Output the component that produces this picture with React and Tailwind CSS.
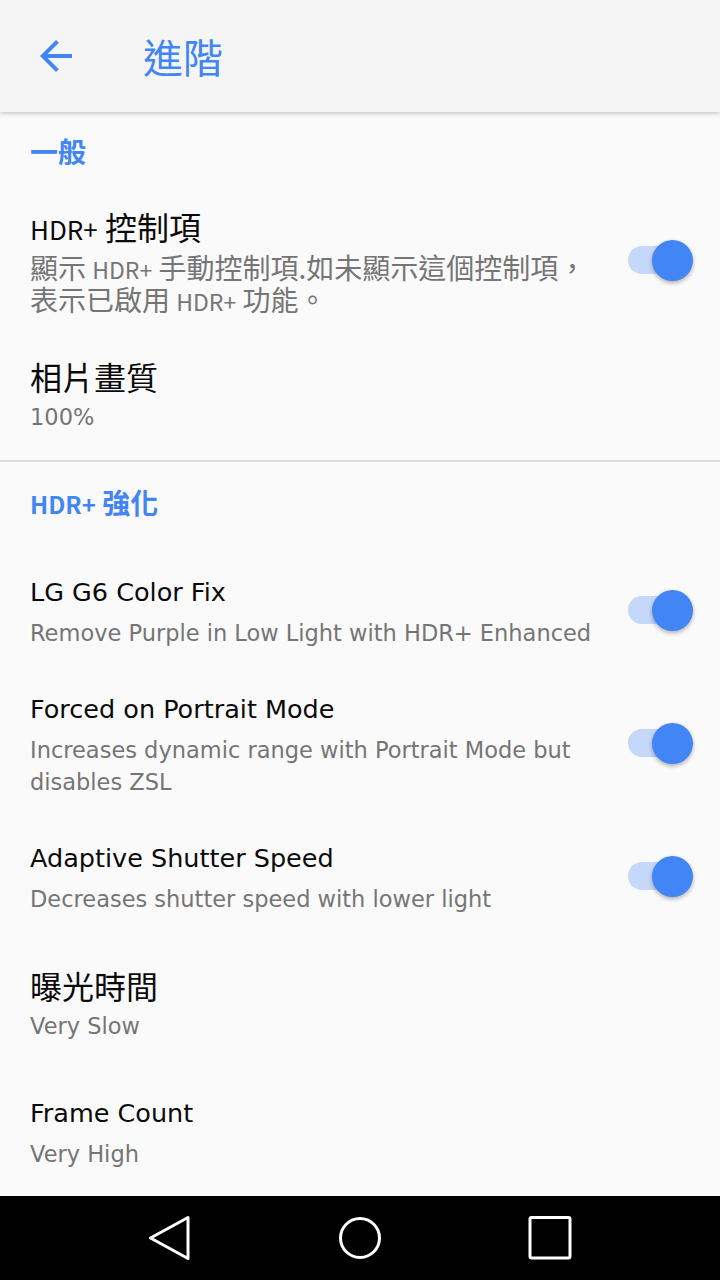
import React from 'react';

const cjk = "font-['Noto_Sans_CJK_TC',sans-serif]";
const latin = "font-['DejaVu_Sans',sans-serif]";

function Toggle() {
  return (
    <div className="relative w-[65px] h-[41px] mr-[27px] mb-[2px] shrink-0">
      <div className="absolute left-0 top-[6px] w-[60px] h-[28px] rounded-full bg-[#c5d8f9]" />
      <div className="absolute right-0 top-0 w-[41px] h-[41px] rounded-full bg-[#4285f4] shadow-[0_2px_4px_rgba(0,0,0,0.3)]" />
    </div>
  );
}

function SettingRow({ title, summary, toggle, cjkTitle, cjkSummary, spacing }) {
  const titleCls = cjkTitle ? `text-[32px] ${cjk}` : `text-[25.5px] ${latin}`;
  const summaryCls = cjkSummary ? `text-[28px] ${cjk}` : `text-[22.5px] ${latin}`;
  return (
    <div className={`flex items-center ${spacing}`}>
      <div className="flex-1 pl-[30px]">
        <div className={`leading-[36px] text-[#0a0a0a] ${titleCls}`}>{title}</div>
        <div className={`mt-[7px] leading-[32px] text-[#757575] ${summaryCls}`}>{summary}</div>
      </div>
      {toggle && <Toggle />}
    </div>
  );
}

function SectionHeader({ children, spacing }) {
  return (
    <div className={`pl-[30px] text-[28px] leading-[32px] font-bold text-[#4285f4] ${cjk} ${spacing}`}>
      {children}
    </div>
  );
}

export default function App() {
  return (
    <div className="w-[720px] h-[1280px] flex flex-col bg-[#fafafa] overflow-hidden">
      {/* App bar */}
      <header className="relative z-10 h-[112px] shrink-0 flex items-center bg-[#f5f5f5] shadow-[0_2px_4px_rgba(0,0,0,0.18)]">
        <svg className="ml-[32px] w-[48px] h-[48px]" viewBox="0 0 24 24" fill="#4285f4">
          <path d="M20 11H7.83l5.59-5.59L12 4l-8 8 8 8 1.41-1.41L7.83 13H20v-2z" />
        </svg>
        <h1 className={`ml-[63px] text-[40px] leading-[48px] text-[#4285f4] ${cjk}`}>進階</h1>
      </header>

      {/* Preferences */}
      <main className="flex-1 overflow-hidden">
        <SectionHeader spacing="mt-[23px]">一般</SectionHeader>
        <SettingRow
          spacing="mt-[41px]"
          cjkTitle
          cjkSummary
          toggle
          title={<><span className="text-[26px] leading-none">HDR+</span> 控制項</>}
          summary={
            <>
              顯示 <span className="text-[23px] leading-none">HDR+</span> 手動控制項.如未顯示這個控制項，
              <br />
              表示已啟用 <span className="text-[23px] leading-none">HDR+</span> 功能。
            </>
          }
        />
        <SettingRow spacing="mt-[43px]" cjkTitle title="相片畫質" summary="100%" />
        <div className="mt-[27px] h-[2px] bg-[#dddddd]" />

        <SectionHeader spacing="mt-[24px]">
          <span className="text-[24px] leading-none">HDR+</span> 強化
        </SectionHeader>
        <SettingRow
          spacing="mt-[56px]"
          toggle
          title="LG G6 Color Fix"
          summary="Remove Purple in Low Light with HDR+ Enhanced"
        />
        <SettingRow
          spacing="mt-[42px]"
          toggle
          title="Forced on Portrait Mode"
          summary={<>Increases dynamic range with Portrait Mode but<br />disables ZSL</>}
        />
        <SettingRow
          spacing="mt-[42px]"
          toggle
          title="Adaptive Shutter Speed"
          summary="Decreases shutter speed with lower light"
        />
        <SettingRow spacing="mt-[52px]" cjkTitle title="曝光時間" summary="Very Slow" />
        <SettingRow spacing="mt-[53px]" title="Frame Count" summary="Very High" />
      </main>

      {/* Navigation bar */}
      <nav className="h-[84px] shrink-0 bg-black flex items-center justify-center">
        <div className="w-[190px] flex justify-center">
          <svg width="44" height="44" viewBox="0 0 44 44" fill="none" stroke="white" strokeWidth="3" strokeLinejoin="round">
            <polygon points="40,1.5 2.5,22 40,42.5" />
          </svg>
        </div>
        <div className="w-[190px] flex justify-center">
          <svg width="44" height="44" viewBox="0 0 44 44" fill="none" stroke="white" strokeWidth="3">
            <circle cx="22" cy="22" r="19.5" />
          </svg>
        </div>
        <div className="w-[190px] flex justify-center">
          <svg width="44" height="44" viewBox="0 0 44 44" fill="none" stroke="white" strokeWidth="3">
            <rect x="2" y="1.5" width="40" height="40.5" rx="1.5" />
          </svg>
        </div>
      </nav>
    </div>
  );
}
